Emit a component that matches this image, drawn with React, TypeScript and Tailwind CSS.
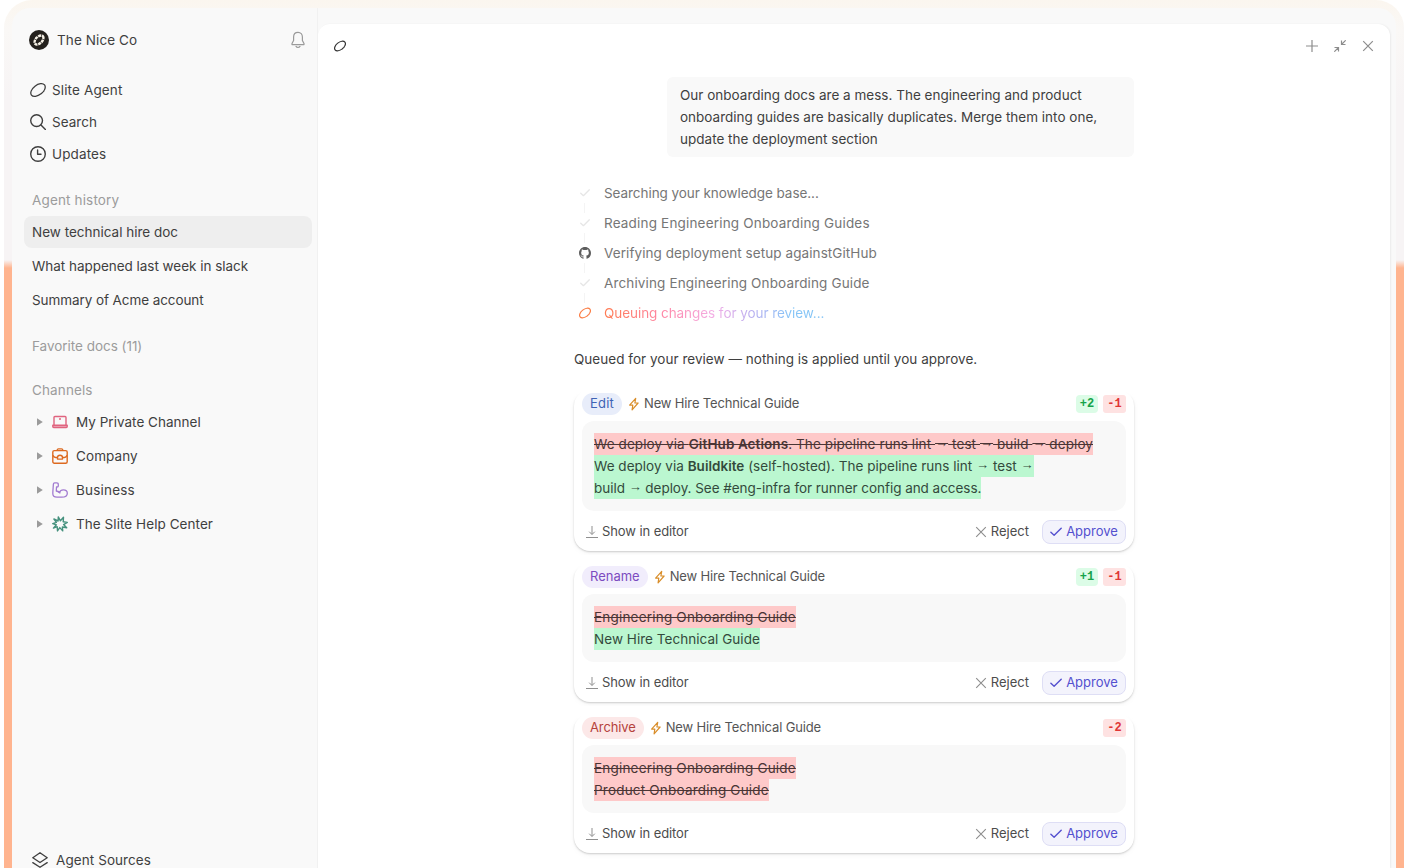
import React from "react";

type Kids = { children?: React.ReactNode; className?: string };

const Ring = ({ className = "" }: { className?: string }) => (
  <svg viewBox="0 0 16 16" className={className} fill="none" stroke="currentColor" strokeLinecap="round">
    <ellipse cx="8" cy="8" rx="8.3" ry="4.9" transform="rotate(-38 8 8)" pathLength="100" strokeDasharray="88 2.5 2 2.5 5 0" strokeDashoffset="-24" />
  </svg>
);

const Logo = () => (
  <svg viewBox="0 0 20 20" className="size-5">
    <circle cx="10" cy="10" r="10" fill="#24211d" />
    <ellipse cx="10" cy="10" rx="5.4" ry="3.3" transform="rotate(-45 10 10)" fill="none" stroke="#f6f1e6" strokeWidth="2.4" strokeDasharray="3 .7" />
  </svg>
);

const Bell = () => (
  <svg viewBox="0 0 16 18" className="h-[18px] w-4" fill="none" stroke="#9a9a9a" strokeWidth="1.2" strokeLinejoin="round" strokeLinecap="round">
    <path d="M8 1.4c-2.7 0-4.4 2-4.4 4.6v3.4L2 12.6v1h12v-1l-1.6-3.2V6c0-2.600-1.700-4.600-4.400-4.600Z" />
    <path d="M6 15.400c.5.8 1.100 1.100 2 1.100s1.500-.3 2-1.100" />
  </svg>
);

const SearchIcon = () => (
  <svg viewBox="0 0 16 16" className="size-4" fill="none" stroke="#3f3f3f" strokeWidth="1.4" strokeLinecap="round">
    <circle cx="6.600" cy="6.600" r="5.900" />
    <path d="m11 11 4.400 4.400" />
  </svg>
);

const Clock = () => (
  <svg viewBox="0 0 16 16" className="size-4" fill="none" stroke="#3f3f3f" strokeWidth="1.400" strokeLinecap="round" strokeLinejoin="round">
    <circle cx="8" cy="8" r="7.300" />
    <path d="M7.600 4v4.300H11" />
  </svg>
);

const Layers = () => (
  <svg viewBox="0 0 16 16" className="size-4" fill="none" stroke="#3f3f3f" strokeWidth="1.300" strokeLinecap="round" strokeLinejoin="round">
    <path d="M8 .7 15.200 5.700 8 10.500.8 5.700Z" />
    <path d="m.8 10.600 7.200 4.700 7.200-4.700" />
  </svg>
);

const Laptop = () => (
  <svg viewBox="0 0 16 16" className="size-4" fill="none" stroke="#e0647f" strokeWidth="1.400" strokeLinejoin="round">
    <path d="M2 11.300V3.400c0-.5.4-.9.9-.9h10.200c.5 0 .9.4.9.9v7.900" />
    <path d="M.8 11.300h14.400v1.300c0 .5-.4.9-.9.9H1.700c-.5 0-.9-.4-.9-.9Z" fill="#e0647f" fillOpacity=".5" />
    <path d="M7 5h2" />
  </svg>
);

const Briefcase = () => (
  <svg viewBox="0 0 16 16" className="size-4" fill="none" stroke="#dd6a20" strokeWidth="1.400" strokeLinejoin="round">
    <rect x=".8" y="2.600" width="14.400" height="12.600" rx="1.500" />
    <path d="M5 2.600c.2-1.200.7-1.700 1.500-1.700h3c.8 0 1.300.5 1.500 1.700" />
    <path d="M.9 7.300c.5 1.300 1.300 2.200 2.700 2.200h1.900M15.100 7.300c-.5 1.300-1.300 2.200-2.700 2.200h-1.900" />
    <path d="M5.500 9.500c0-1.300 1-2.200 2.500-2.200s2.500.9 2.500 2.200v1.600h-5Z" />
  </svg>
);

const Arm = () => (
  <svg viewBox="0 0 16 16" className="size-4" fill="none" stroke="#a27bd1" strokeWidth="1.300" strokeLinejoin="round" strokeLinecap="round">
    <path d="M2.600.8h2.200c1 0 1.500.7 1.500 1.700v1.300c0 .8-.5 1.200-1.200 1.200h-.6L4.300 9c1.200.2 2.300.7 3.200 1.500.6-1.700 2-2.600 3.800-2.600 2.400 0 4 1.300 4 3.300 0 2.600-2.300 4-5.500 4H5c-2.900 0-4.300-1.300-4.200-3.900.1-3 .4-6 .6-9.200C1.500 1.200 1.900.8 2.600.8Z" />
    <path d="M6.300 9.600c.6.300 1.100.7 1.600 1.300" />
  </svg>
);

const Splash = () => (
  <svg viewBox="0 0 16 16" className="size-4" fill="none" stroke="#45917d" strokeWidth="1.400" strokeLinejoin="round">
    <path d="M6.300.9 8.400 4.800 11.500 1.200l-.3 4.600 4.100.6-3.700 2.200 3.100 3.200-4.300-.8.300 3.900-2.900-3.300-2.300 3.300-.3-4.200-3.800 1.400L4.400 8.800.7 7.600l3.700-1.200L1.900 3l4.200 2Z" />
  </svg>
);

const Octo = () => (
  <svg viewBox="0 0 16 16" className="size-3" fill="#5e5e5e">
    <path d="M8 0C3.580 0 0 3.580 0 8c0 3.540 2.290 6.530 5.470 7.590.4.070.55-.17.55-.38 0-.19-.010-.82-.010-1.490-2.010.37-2.530-.49-2.690-.94-.09-.23-.48-.94-.82-1.130-.28-.15-.68-.52-.010-.53.63-.010 1.080.58 1.230.82.72 1.210 1.870.87 2.330.66.070-.52.28-.87.51-1.070-1.780-.2-3.640-.89-3.640-3.950 0-.87.31-1.590.82-2.150-.08-.2-.36-1.020.08-2.120 0 0 .67-.21 2.200.82.64-.18 1.320-.27 2-.27s1.360.09 2 .27c1.530-1.040 2.200-.82 2.200-.82.44 1.100.16 1.920.08 2.120.51.56.82 1.270.82 2.150 0 3.070-1.870 3.750-3.650 3.950.29.25.54.73.54 1.480 0 1.070-.010 1.930-.010 2.200 0 .21.15.46.55.38A8.010 8.010 0 0 0 16 8c0-4.420-3.580-8-8-8Z" />
  </svg>
);

const Check = ({ className }: { className: string }) => (
  <svg viewBox="0 0 12 12" className={className} fill="none" stroke="currentColor" strokeLinecap="round" strokeLinejoin="round">
    <path d="m.9 6.200 3.200 3L11.200 2.200" />
  </svg>
);

const Bolt = () => (
  <svg viewBox="0 0 12 14" className="h-[14px] w-3" fill="none" stroke="#d98e2b" strokeWidth="1.200" strokeLinejoin="round">
    <path d="M7.700 1.300 1.600 8.100h3.200l-.7 4.700 6-6.800H6.900Z" />
  </svg>
);

const Download = () => (
  <svg viewBox="0 0 12 12" className="size-3" fill="none" stroke="#8f8f8f" strokeWidth="1">
    <path d="M6 0v8.300M3.200 5.700 6 8.500l2.800-2.800M0 11.500h12" />
  </svg>
);

const Cross = ({ className }: { className: string }) => (
  <svg viewBox="0 0 12 12" className={className} fill="none" stroke="currentColor" strokeWidth="1.100">
    <path d="m1.200 1.200 9.600 9.600m0-9.600-9.600 9.600" />
  </svg>
);

const Caret = () => (
  <svg viewBox="0 0 6 8" className="h-2 w-1.5" fill="#9b9b9b">
    <path d="M0 .2 5.800 4 0 7.800Z" />
  </svg>
);

const Arrow = () => <span className="align-[2px] font-['Liberation_Sans',sans-serif] text-[13px] leading-none">→</span>;

const Del = ({ children, className = "" }: Kids) => (
  <div className={`h-[22px] w-fit whitespace-nowrap bg-[#fec9c9] text-[#4a3535] line-through decoration-[1px] ${className}`}>{children}</div>
);
const Add = ({ children, className = "" }: Kids) => (
  <div className={`h-[22px] w-fit whitespace-nowrap bg-[#bbf7d0] text-[#334a3c] ${className}`}>{children}</div>
);

function Card({ tag, tagClass, plus, minus, children }: { tag: string; tagClass: string; plus?: string; minus: string; children: React.ReactNode }) {
  return (
    <section className="relative rounded-2xl bg-white px-2 pt-0.5 shadow-[0_1px_2px_rgba(0,0,0,0.18),0_2px_6px_rgba(0,0,0,0.04)]">
      <div className="absolute -inset-x-1 -top-2 h-5 bg-gradient-to-b from-white via-white to-transparent" />
      <header className="relative flex h-[29px] items-start text-[13px]">
        <div className="flex h-6 w-full items-center">
          <span className={`flex h-[22px] items-center rounded-full px-2 ${tagClass}`}>{tag}</span>
          <span className="ml-1.5 mr-1"><Bolt /></span>
          <span className="tracking-[-0.145px] text-[#555]">New Hire Technical Guide</span>
          <span className="ml-auto flex gap-[5px] font-['Liberation_Mono',monospace] text-[12px]">
            {plus && <b className="flex h-[18px] w-[22px] items-center justify-center rounded-[4px] bg-[#dcfce7] font-semibold text-[#16a34a]">{plus}</b>}
            <b className="flex h-[18px] w-[23px] items-center justify-center rounded-[3px] bg-[#fee2e2] font-semibold text-[#e03636]">{minus}</b>
          </span>
        </div>
      </header>
      <div className="rounded-xl bg-[#f8f8f8] p-3 text-[13.5px] leading-[22px]">{children}</div>
      <footer className="flex h-10 items-center pt-px text-[13px] text-[#4c4c4c]">
        <span className="ml-1 flex items-center gap-1 tracking-[-0.09px]"><Download />Show in editor</span>
        <span className="ml-auto flex items-center gap-1"><Cross className="size-3 text-[#8d8d8d]" />Reject</span>
        <span className="ml-[13px] flex h-6 w-[84px] items-center justify-center gap-1 rounded-lg border border-[#dedef5] bg-[#f3f3fc] text-[#5450cf]">
          <Check className="size-3 stroke-[1.4]" />Approve
        </span>
      </footer>
    </section>
  );
}

const NAV = [
  { label: "Slite Agent", icon: <Ring className="size-4 stroke-[1.3] text-[#3f3f3f]" />, fit: "tracking-[0.13px]" },
  { label: "Search", icon: <SearchIcon />, fit: "tracking-[0.04px]" },
  { label: "Updates", icon: <Clock />, fit: "tracking-[0.12px]" },
];
const CHANNELS = [
  { label: "My Private Channel", icon: <Laptop />, fit: "tracking-[0.02px]" },
  { label: "Company", icon: <Briefcase />, fit: "tracking-[0.09px]" },
  { label: "Business", icon: <Arm />, fit: "tracking-[0.2px]" },
  { label: "The Slite Help Center", icon: <Splash />, fit: "tracking-[0.06px]" },
];
const tick = <Check className="size-2.5 stroke-[1.6] text-[#e6e6e6]" />;
const STEPS = [
  { label: "Searching your knowledge base...", icon: tick, fit: "tracking-[-0.06px]" },
  { label: "Reading Engineering Onboarding Guides", icon: tick, fit: "tracking-[0.18px]" },
  { label: "Verifying deployment setup againstGitHub", icon: <Octo />, fit: "tracking-[0.08px]" },
  { label: "Archiving Engineering Onboarding Guide", icon: tick, fit: "tracking-[0.14px]" },
];

export default function App() {
  return (
    <div className="h-[868px] w-[1408px] overflow-hidden bg-white px-1 font-['Inter',sans-serif] text-[13.5px] text-[#3f3f3f]">
      <div className="h-full rounded-t-[28px] bg-[linear-gradient(180deg,#fbf6ef_0px,#faf8f6_30px,#f7f4f5_100px,#f7f4f5_260px,#ffb48f_268px,#ffb48f_100%)] px-2 pt-2">
        <div className="flex h-full overflow-hidden rounded-t-[18px] bg-[#f9f9f9] pr-1.5">
          <aside className="flex w-[306px] shrink-0 flex-col border-r border-[#f1f1f1] pt-5">
            <div className="flex h-6 items-center pl-[17px] pr-[11px]">
              <Logo />
              <span className="ml-2 tracking-[0.1px]">The Nice Co</span>
              <span className="ml-auto"><Bell /></span>
            </div>
            <nav className="mt-[22px]">
              {NAV.map((n) => (
                <div key={n.label} className="flex h-8 items-center gap-1.5 pl-[18px]">{n.icon}<span className={n.fit}>{n.label}</span></div>
              ))}
            </nav>
            <div className="mt-[14px] flex h-8 items-center pl-5 tracking-[0.15px] text-[#9c9c9c]">Agent history</div>
            <div className="flex flex-col gap-0.5">
              <div className="ml-3 mr-[5px] flex h-8 items-center rounded-lg bg-[#eeeeee] pl-2">New technical hire doc</div>
              <div className="flex h-8 items-center pl-5 tracking-[-0.03px]">What happened last week in slack</div>
              <div className="flex h-8 items-center pl-5 tracking-[-0.08px]">Summary of Acme account</div>
            </div>
            <div className="mt-[14px] flex h-8 items-center pl-5 tracking-[-0.03px] text-[#9c9c9c]">Favorite docs (11)</div>
            <div className="mt-3 flex h-8 items-center pl-5 tracking-[0.12px] text-[#9c9c9c]">Channels</div>
            <div className="flex flex-col gap-0.5">
              {CHANNELS.map((c) => (
                <div key={c.label} className="flex h-8 items-center pl-[25px]">
                  <Caret /><span className="ml-[9px] mr-2">{c.icon}</span><span className={c.fit}>{c.label}</span>
                </div>
              ))}
            </div>
            <div className="mb-[-8px] mt-auto flex h-8 shrink-0 items-center gap-2 pl-5 tracking-[0.08px]"><Layers />Agent Sources</div>
          </aside>

          <main className="mt-4 flex flex-1 flex-col rounded-t-xl bg-white shadow-[1px_0_2px_rgba(0,0,0,0.06)]">
            <div className="flex h-11 items-center pl-4 pr-4 text-[#8d8d8d]">
              <Ring className="size-3 stroke-[1.6] text-[#333]" />
              <div className="ml-auto flex items-center gap-4">
                <svg viewBox="0 0 12 12" className="size-3" fill="none" stroke="currentColor" strokeWidth="1.2"><path d="M6 0v12M0 6h12" /></svg>
                <svg viewBox="0 0 12 12" className="size-3" fill="none" stroke="currentColor" strokeWidth="1.2"><path d="M11.700.3 7.500 4.500M7.500.5v4h4M.3 11.700l4.200-4.200M.5 7.500h4v4" /></svg>
                <Cross className="size-3 stroke-[1.2]" />
              </div>
            </div>
            <div className="ml-64 mt-[9px] flex w-[560px] flex-col">
              <div className="ml-auto h-20 w-[467px] rounded-md bg-[#f9f9f9] pl-[13px] pt-[7px] leading-[22px] tracking-[0.01px]">
                Our onboarding docs are a mess. The engineering and product<br />
                onboarding guides are basically duplicates. Merge them into one,<br />
                update the deployment section
              </div>
              <div className="mt-[21px] text-[#767676]">
                {STEPS.map((s) => (
                  <div key={s.label} className="relative flex h-[30px] items-center">
                    <span className="ml-[3px] mr-3 flex w-[15px] justify-center">{s.icon}</span><span className={s.fit}>{s.label}</span>
                    <i className="absolute left-[10px] top-[25px] h-2.5 w-px bg-[#f4f4f4]" />
                  </div>
                ))}
                <div className="flex h-[30px] items-center">
                  <span className="ml-[3px] mr-3 flex w-[15px] justify-center"><Ring className="size-3 stroke-[1.600] text-[#fb7d45]" /></span>
                  <span className="bg-[linear-gradient(90deg,#ff7a50,#ff86a6_27%,#f3aee6_50%,#b8b0f0_68%,#86c5f7_85%,#84c4f5)] bg-clip-text tracking-[-0.06px] text-transparent">Queuing changes for your review...</span>
                </div>
              </div>
              <p className="mt-5 leading-[22px] tracking-[0.03px]">Queued for your review — nothing is applied until you approve.</p>
              <div className="mt-5 flex flex-col gap-3">
                <Card tag="Edit" tagClass="bg-[#e8edfa] text-[#3f63b5] tracking-[0.2px]" plus="+2" minus="-1">
                  <Del className="tracking-[0.09px]">We deploy via <b className="font-semibold">GitHub Actions</b>. The pipeline runs lint <Arrow /> test <Arrow /> build <Arrow /> deploy</Del>
                  <Add className="tracking-[0.02px]">We deploy via <b className="font-semibold">Buildkite</b> (self-hosted). The pipeline runs lint <Arrow /> test <Arrow /></Add>
                  <Add className="tracking-[-0.04px]">build <Arrow /> deploy. See #eng-infra for runner config and access.</Add>
                </Card>
                <Card tag="Rename" tagClass="bg-[#f1edfc] text-[#7c4bc0]" plus="+1" minus="-1">
                  <Del className="tracking-[0.2px]">Engineering Onboarding Guide</Del>
                  <Add className="tracking-[0.04px]">New Hire Technical Guide</Add>
                </Card>
                <Card tag="Archive" tagClass="bg-[#fce8e8] text-[#b5423c] tracking-[-0.12px]" minus="-2">
                  <Del className="tracking-[0.2px]">Engineering Onboarding Guide</Del>
                  <Del className="tracking-[0.2px]">Product Onboarding Guide</Del>
                </Card>
              </div>
            </div>
          </main>
        </div>
      </div>
    </div>
  );
}
